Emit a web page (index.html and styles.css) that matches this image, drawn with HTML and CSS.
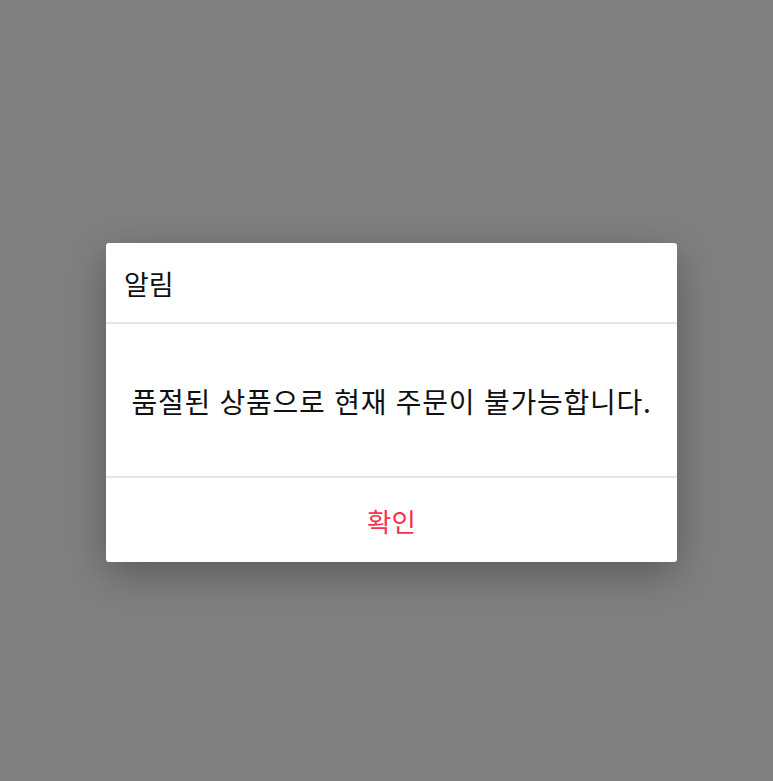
FILE: index.html
```html
<!DOCTYPE html>
<html lang="ko">
<head>
<meta charset="utf-8">
<link rel="stylesheet" href="styles.css">
</head>
<body>
<div class="overlay">
  <div class="dialog">
    <div class="dialog-title">알림</div>
    <div class="dialog-body">품절된 상품으로 현재 주문이 불가능합니다.</div>
    <div class="dialog-actions"><span class="btn-ok">확인</span></div>
  </div>
</div>
</body>
</html>
```
FILE: styles.css
```css
html, body {
  margin: 0;
  padding: 0;
  height: 100%;
}
body {
  background: #808080;
  font-family: "Noto Sans CJK KR", "Noto Sans", sans-serif;
}
.overlay {
  padding: 243px 0 0 106px;
}
.dialog {
  width: 571px;
  background: #fff;
  border-radius: 3px;
  box-shadow: 0 12px 40px rgba(0, 0, 0, 0.3);
  overflow: hidden;
}
.dialog-title {
  height: 81px;
  box-sizing: border-box;
  display: flex;
  align-items: center;
  padding: 0 18px;
  padding-top: 2px;
  font-size: 27px;
  color: #111;
  border-bottom: 2px solid #e6e6e6;
}
.dialog-body {
  height: 154px;
  box-sizing: border-box;
  display: flex;
  align-items: center;
  justify-content: center;
  font-size: 28px;
  letter-spacing: 0.75px;
  color: #111;
  border-bottom: 2px solid #e6e6e6;
  padding-top: 1px;
}
.dialog-actions {
  height: 84px;
  display: flex;
  align-items: center;
  justify-content: center;
}
.btn-ok {
  font-size: 26.5px;
  color: #f5334f;
}
```
